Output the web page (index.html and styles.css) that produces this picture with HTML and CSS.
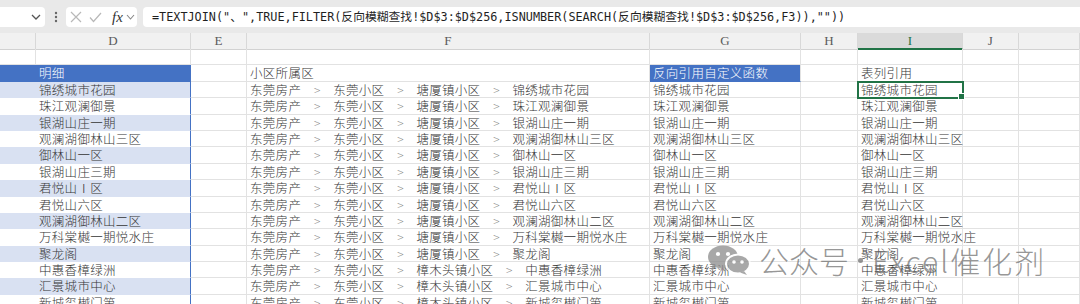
FILE: index.html
```html
<!DOCTYPE html><html lang="zh-CN">
<head>
  <meta charset="UTF-8" />
  <title>反向模糊查找</title>
  <link rel="stylesheet" href="styles.css">
</head>
<body>
  <div class="formula-bar">
    <div class="name-box">
      <svg width="10" height="6" viewBox="0 0 10 6"><polyline points="1,1 5,5 9,1" fill="none" stroke="#555" stroke-width="1.3"/></svg>
    </div>
    <div class="dots">
      <svg width="4" height="12" viewBox="0 0 4 12"><circle cx="2" cy="2" r="1.2" fill="#666"/><circle cx="2" cy="6" r="1.2" fill="#666"/><circle cx="2" cy="10" r="1.2" fill="#666"/></svg>
    </div>
    <div class="fn-box">
      <svg class="ic-x" width="12" height="12" viewBox="0 0 12 12"><path d="M1 1 L11 11 M11 1 L1 11" stroke="#b8b8b8" stroke-width="1.2"/></svg>
      <svg class="ic-ok" width="13" height="11" viewBox="0 0 13 11"><polyline points="1,5.5 4.5,9.5 12,1" fill="none" stroke="#b8b8b8" stroke-width="1.2"/></svg>
      <span class="fx">fx</span>
      <svg class="ic-down" width="9" height="6" viewBox="0 0 9 6"><polyline points="1,1 4.5,5 8,1" fill="none" stroke="#888" stroke-width="1.1"/></svg>
    </div>
    <div class="formula">=TEXTJOIN("、",TRUE,FILTER(反向模糊查找!$D$3:$D$256,ISNUMBER(SEARCH(反向模糊查找!$D$3:$D$256,F3)),""))</div>
  </div>

  <div class="sheet">
    <div class="row col-head">
      <div class="cell"></div>
      <div class="cell">D</div>
      <div class="cell">E</div>
      <div class="cell">F</div>
      <div class="cell">G</div>
      <div class="cell">H</div>
      <div class="cell active">I</div>
      <div class="cell">J</div>
      <div class="cell"></div>
    </div>
    <div id="rows"></div>
  </div>

  <div class="watermark">
    <svg width="44" height="30" viewBox="0 0 44 30">
      <ellipse cx="16" cy="12" rx="15" ry="11.5" fill="#8c8c8c"/>
      <path d="M6 19 L4 25 L11 21 Z" fill="#8c8c8c"/>
      <circle cx="11" cy="9" r="2.1" fill="#fff"/>
      <circle cx="21" cy="9" r="2.1" fill="#fff"/>
      <ellipse cx="31" cy="19" rx="12" ry="9.5" fill="#8c8c8c" stroke="#fff" stroke-width="2"/>
      <path d="M37 26 L40 30 L33 27.5 Z" fill="#8c8c8c"/>
      <circle cx="27" cy="17" r="1.8" fill="#fff"/>
      <circle cx="35" cy="17" r="1.8" fill="#fff"/>
    </svg>
    <span>公众号</span>
    <span class="wm-dot"></span>
    <span class="wm-name">Excel催化剂</span>
  </div>

  <script>
    const items = [
      ["锦绣城市花园", "塘厦镇小区"],
      ["珠江观澜御景", "塘厦镇小区"],
      ["银湖山庄一期", "塘厦镇小区"],
      ["观澜湖御林山三区", "塘厦镇小区"],
      ["御林山一区", "塘厦镇小区"],
      ["银湖山庄三期", "塘厦镇小区"],
      ["君悦山Ⅰ区", "塘厦镇小区"],
      ["君悦山六区", "塘厦镇小区"],
      ["观澜湖御林山二区", "塘厦镇小区"],
      ["万科棠樾一期悦水庄", "塘厦镇小区"],
      ["聚龙阁", "塘厦镇小区"],
      ["中惠香樟绿洲", "樟木头镇小区"],
      ["汇景城市中心", "樟木头镇小区"],
      ["新城玺樾门第", "樟木头镇小区"]
    ];

    function row(cells) {
      const r = document.createElement('div');
      r.className = 'row';
      cells.forEach(c => {
        const d = document.createElement('div');
        d.className = 'cell ' + (c.cls || '');
        if (c.html) d.innerHTML = c.html;
        else if (c.text) d.textContent = c.text;
        r.appendChild(d);
      });
      document.getElementById('rows').appendChild(r);
    }

    row([{}, {}, {}, {}, {}, {}, {}, {}, {}]);
    row([
      { cls: 'band-head' }, { cls: 'band-head d-col', text: '明细' }, {},
      { text: '小区所属区' }, { cls: 'blue-head', text: '反向引用自定义函数' }, {},
      { text: '表列引用' }, {}, {}
    ]);

    items.forEach(([name, town], i) => {
      const band = i % 2 === 0 ? 'band' : 'plain';
      const crumbs = ['东莞房产', '东莞小区', town, name]
        .map(t => '<span>' + t + '</span>')
        .join('<span class="sep">&gt;</span>');
      row([
        { cls: band }, { cls: band + ' d-col', text: name }, {},
        { html: crumbs }, { text: name }, {},
        { cls: i === 0 ? 'selected' : '', text: name }, {}, {}
      ]);
    });
  </script>
</body>
</html>
```
FILE: styles.css
```css
body {
  margin: 0;
  width: 1080px;
  height: 304px;
  overflow: hidden;
  background: #ffffff;
  font-family: "Noto Sans CJK SC", sans-serif;
  color: #353535;
}
.formula-bar {
  height: 33px;
  box-sizing: border-box;
  padding-top: 7px;
  background: #e9e9e9;
  display: flex;
  align-items: flex-start;
}
.name-box {
  width: 45px;
  height: 20px;
  box-sizing: border-box;
  padding-right: 4px;
  background: #fff;
  border-radius: 0 4px 4px 0;
  display: flex;
  align-items: center;
  justify-content: flex-end;
}
.dots {
  width: 21px;
  height: 20px;
  display: flex;
  align-items: center;
  justify-content: center;
}
.fn-box {
  width: 71px;
  height: 20px;
  box-sizing: border-box;
  padding-left: 4px;
  background: #fff;
  border-radius: 4px;
  display: flex;
  align-items: center;
}
.ic-ok {
  margin-left: 7px;
}
.fx {
  margin-left: 10px;
  font-family: "Liberation Serif", serif;
  font-style: italic;
  font-size: 15px;
  color: #333;
  line-height: 20px;
}
.ic-down {
  margin-left: 3px;
}
.formula {
  flex: 1;
  margin-left: 6px;
  height: 20px;
  padding-left: 9px;
  background: #fff;
  border-radius: 4px 0 0 4px;
  font-family: "DejaVu Sans Mono", "Noto Sans CJK SC", monospace;
  font-size: 11.8px;
  line-height: 20px;
  color: #1f1f1f;
  white-space: nowrap;
}
.sheet {
  font-size: 12.5px;
  font-weight: 300;
  letter-spacing: 0.3px;
}
.row {
  display: grid;
  grid-template-columns: 36px 155px 56px 403px 151px 57px 105px 56px 1fr;
  height: 16.4px;
}
.cell {
  box-sizing: border-box;
  border-right: 1px solid #e2e2e2;
  border-bottom: 1px solid #e2e2e2;
  padding: 0 3px;
  line-height: 15.4px;
  white-space: nowrap;
  min-width: 0;
}
.col-head {
  height: 16px;
  background: #f1f1f1;
}
.col-head .cell {
  border-right-color: #d8d8d8;
  border-bottom: 1px solid #d2d2d2;
  text-align: center;
  font-family: "Liberation Serif", serif;
  font-weight: normal;
  font-size: 13px;
  line-height: 15px;
  color: #5a5a5a;
}
.col-head .active {
  background: #dadada;
  border-bottom: 2px solid #217346;
  color: #217346;
}
.band-head,
.blue-head {
  background: #4472c4;
  color: #fff;
  border-bottom-color: #4472c4;
}
.band {
  background: #d9e1f2;
  border-bottom-color: transparent;
}
.plain {
  background: #fff;
  border-bottom-color: transparent;
}
.band-head,
.band,
.plain {
  border-right-color: transparent;
}
.d-col {
  border-right: 1px solid #4472c4;
}
.sep {
  display: inline-block;
  width: 32px;
  letter-spacing: 0;
  text-align: center;
  color: #8a8a8a;
  font-size: 12px;
}
.selected {
  position: relative;
  outline: 2px solid #217346;
  outline-offset: -1px;
}
.selected::after {
  content: "";
  position: absolute;
  right: -3px;
  bottom: -3px;
  width: 5px;
  height: 5px;
  background: #217346;
  border: 1px solid #fff;
}
.watermark {
  position: absolute;
  left: 707px;
  top: 238px;
  display: flex;
  align-items: center;
  gap: 9px;
  font-size: 30px;
  font-weight: 300;
  color: rgba(105, 105, 105, 0.7);
}
.watermark svg {
  opacity: 0.75;
  margin-right: -1px;
}
.wm-dot {
  width: 5px;
  height: 5px;
  border-radius: 50%;
  background: rgba(105, 105, 105, 0.7);
}
.wm-name {
  letter-spacing: 2px;
}
```
